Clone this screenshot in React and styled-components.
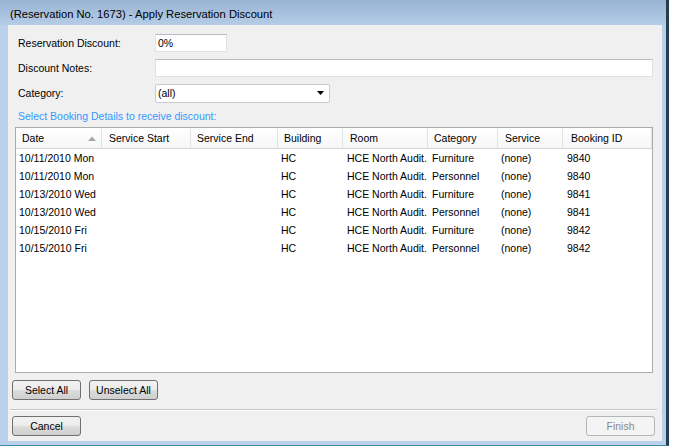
import styled, { createGlobalStyle } from "styled-components";

const GlobalStyle = createGlobalStyle`
  html, body {
    margin: 0;
    padding: 0;
    background: #ffffff;
  }
  body {
    font-family: "Liberation Sans", Arial, sans-serif;
    font-size: 10.5px;
    color: #000000;
  }
`;

const Window = styled.div`
  box-sizing: border-box;
  width: 669px;
  height: 446px;
  display: flex;
  flex-direction: column;
  padding: 0 4px 4px 8px;
  background: linear-gradient(to bottom, #98b3d3 0, #b5cce6 25px, #b9d1ea 25px);
  border-right: 3px solid #243e4f;
  border-bottom: 1px solid #3f8aa6;
`;

const TitleBar = styled.div`
  box-sizing: border-box;
  height: 25px;
  display: flex;
  align-items: center;
  padding: 3px 0 0 2px;
  font-size: 11.2px;
  color: #000000;
  white-space: nowrap;
`;

const Body = styled.div`
  flex: 1;
  display: flex;
  flex-direction: column;
  background: #f0f0f0;
  padding: 9px 9px 5px 7px;
  min-height: 0;
`;

const FieldRow = styled.div`
  display: flex;
  align-items: center;
  height: 18px;
  & + & {
    margin-top: 7px;
  }
`;

const Label = styled.div`
  box-sizing: border-box;
  width: 140px;
  flex-shrink: 0;
  padding-left: 3px;
  white-space: nowrap;
`;

const TextBox = styled.div`
  box-sizing: border-box;
  height: 18px;
  width: ${(p) => (p.$width ? `${p.$width}px` : "auto")};
  flex: ${(p) => (p.$width ? "none" : "1")};
  display: flex;
  align-items: center;
  padding: 0 2px;
  background: #ffffff;
  border: 1px solid #dde0e5;
  border-top-color: #b7bac0;
`;

const Combo = styled.div`
  box-sizing: border-box;
  width: 175px;
  height: 19px;
  display: flex;
  align-items: center;
  justify-content: space-between;
  padding: 0 5px 0 2px;
  background: #ffffff;
  border: 1px solid #c8cbd0;
  border-radius: 2px;
`;

const Hint = styled.div`
  margin-top: 7px;
  height: 14px;
  line-height: 14px;
  padding-left: 3px;
  color: #3399ff;
`;

const Grid = styled.div`
  margin-top: 4px;
  flex: 1;
  min-height: 0;
  background: #ffffff;
  border: 1px solid #ababab;
  overflow: hidden;
`;

const cols = "86px 89px 87px 65px 85px 70px 65px 89px";

const HeaderRow = styled.div`
  box-sizing: border-box;
  display: grid;
  grid-template-columns: ${cols};
  height: 21px;
  border-bottom: 1px solid #d5d5d5;
  background: linear-gradient(to bottom, #ffffff, #f6f7f9);
`;

const HeaderCell = styled.div`
  box-sizing: border-box;
  display: flex;
  align-items: center;
  justify-content: space-between;
  padding: 0 5px 0 ${(p) => p.$pad}px;
  border-right: 1px solid #e2e3e5;
  white-space: nowrap;
`;

const DataRow = styled.div`
  display: grid;
  grid-template-columns: ${cols};
  height: 18px;
  align-items: center;
`;

const Cell = styled.div`
  padding-left: ${(p) => p.$pad}px;
  white-space: nowrap;
  overflow: hidden;
`;

const ButtonRow = styled.div`
  display: flex;
  gap: 8px;
  margin: 7px 0 0 -3px;
`;

const Separator = styled.div`
  margin: 9px -4px 0 -5px;
  border-top: 1px solid #c6c6c6;
  border-bottom: 1px solid #ffffff;
`;

const Footer = styled.div`
  display: flex;
  justify-content: space-between;
  margin: 5px -2px 0 -3px;
`;

const Button = styled.button`
  box-sizing: border-box;
  width: 69px;
  height: 20px;
  padding: 0;
  font-family: inherit;
  font-size: 10.5px;
  color: ${(p) => (p.disabled ? "#8a8a8a" : "#000000")};
  border: 1px solid ${(p) => (p.disabled ? "#b2b6b9" : "#707070")};
  border-radius: 3px;
  background: ${(p) =>
    p.disabled
      ? "#f4f4f4"
      : "linear-gradient(to bottom, #f2f2f2 0%, #ebebeb 50%, #dddddd 50%, #cfcfcf 100%)"};
`;

const columns = [
  { label: "Date", head: 6, cell: 3, sort: true },
  { label: "Service Start", head: 7, cell: 3 },
  { label: "Service End", head: 6, cell: 3 },
  { label: "Building", head: 6, cell: 3 },
  { label: "Room", head: 7, cell: 4 },
  { label: "Category", head: 6, cell: 4 },
  { label: "Service", head: 7, cell: 3 },
  { label: "Booking ID", head: 8, cell: 4 },
];

const rows = [
  ["10/11/2010 Mon", "", "", "HC", "HCE North Audit.", "Furniture", "(none)", "9840"],
  ["10/11/2010 Mon", "", "", "HC", "HCE North Audit.", "Personnel", "(none)", "9840"],
  ["10/13/2010 Wed", "", "", "HC", "HCE North Audit.", "Furniture", "(none)", "9841"],
  ["10/13/2010 Wed", "", "", "HC", "HCE North Audit.", "Personnel", "(none)", "9841"],
  ["10/15/2010 Fri", "", "", "HC", "HCE North Audit.", "Furniture", "(none)", "9842"],
  ["10/15/2010 Fri", "", "", "HC", "HCE North Audit.", "Personnel", "(none)", "9842"],
];

const SortArrow = () => (
  <svg width="8" height="5" viewBox="0 0 8 5">
    <path d="M0 5 L4 0.5 L8 5 Z" fill="#a6a6a6" />
  </svg>
);

const DropArrow = () => (
  <svg width="7" height="4" viewBox="0 0 7 4">
    <path d="M0 0 H7 L3.5 4 Z" fill="#000000" />
  </svg>
);

export default function App() {
  return (
    <>
      <GlobalStyle />
      <Window>
        <TitleBar>(Reservation No. 1673) - Apply Reservation Discount</TitleBar>
        <Body>
          <FieldRow>
            <Label>Reservation Discount:</Label>
            <TextBox $width={72}>0%</TextBox>
          </FieldRow>
          <FieldRow>
            <Label>Discount Notes:</Label>
            <TextBox />
          </FieldRow>
          <FieldRow>
            <Label>Category:</Label>
            <Combo>
              <span>(all)</span>
              <DropArrow />
            </Combo>
          </FieldRow>
          <Hint>Select Booking Details to receive discount:</Hint>
          <Grid>
            <HeaderRow>
              {columns.map((c) => (
                <HeaderCell key={c.label} $pad={c.head}>
                  <span>{c.label}</span>
                  {c.sort && <SortArrow />}
                </HeaderCell>
              ))}
            </HeaderRow>
            {rows.map((r, i) => (
              <DataRow key={i}>
                {r.map((v, j) => (
                  <Cell key={j} $pad={columns[j].cell}>
                    {v}
                  </Cell>
                ))}
              </DataRow>
            ))}
          </Grid>
          <ButtonRow>
            <Button>Select All</Button>
            <Button>Unselect All</Button>
          </ButtonRow>
          <Separator />
          <Footer>
            <Button>Cancel</Button>
            <Button disabled>Finish</Button>
          </Footer>
        </Body>
      </Window>
    </>
  );
}
